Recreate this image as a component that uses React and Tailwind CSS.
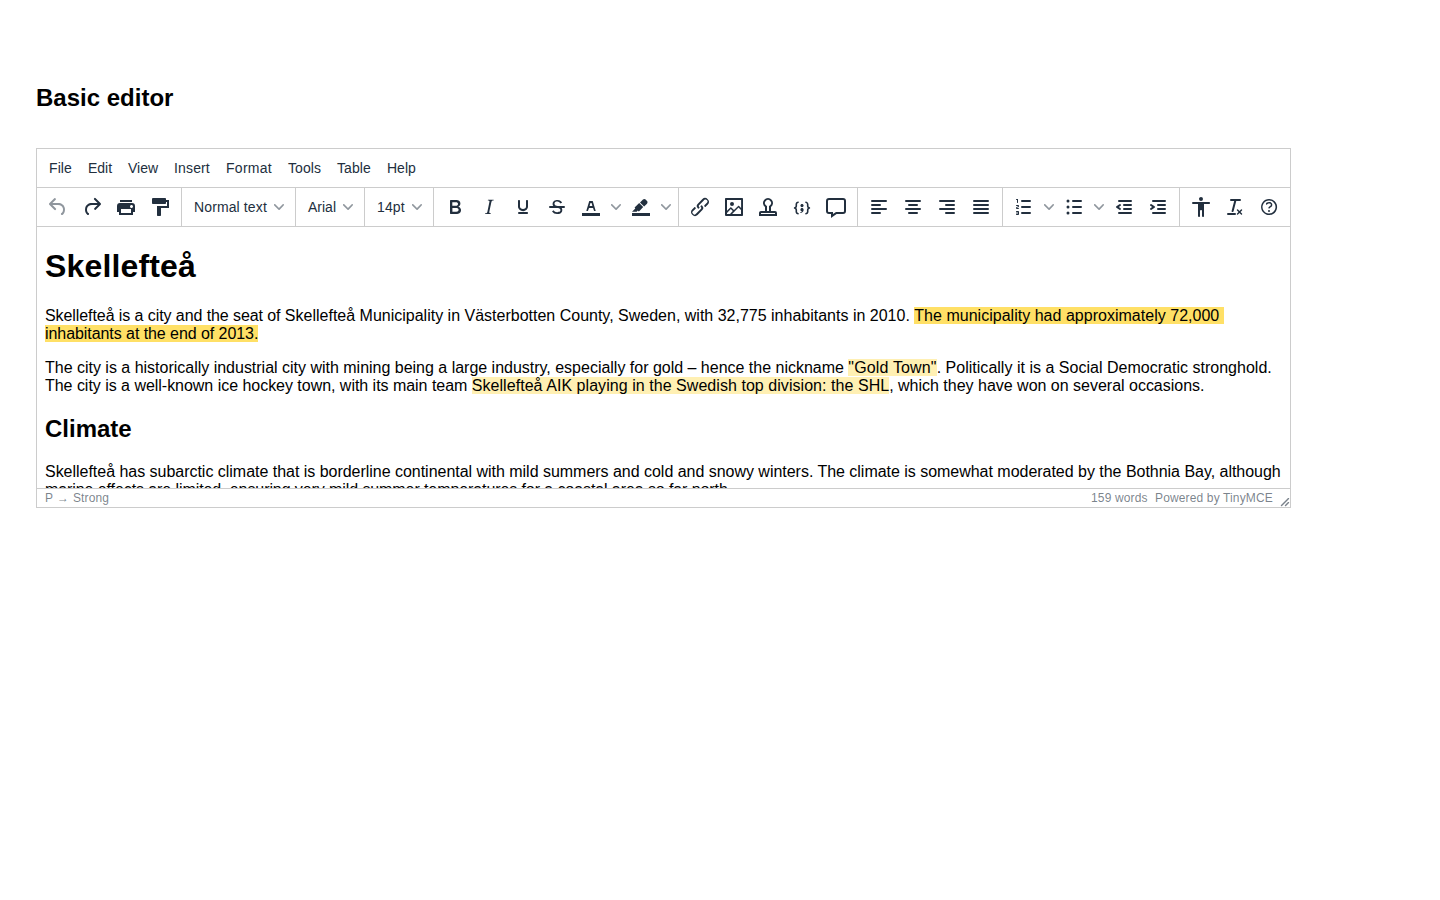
const ICONS = {
  undo: ['M6.4 8H12c3.7 0 6.2 2 6.8 5.1.6 2.7-.4 5.6-2.3 6.8a1 1 0 01-1-1.8c1.1-.6 1.8-2.7 1.4-4.6-.5-2.1-2.1-3.5-4.9-3.5H6.4l3.3 3.3a1 1 0 11-1.4 1.4l-5-5a1 1 0 010-1.4l5-5a1 1 0 011.4 1.4L6.4 8z'],
  redo: ['M17.6 10H12c-2.8 0-4.4 1.4-4.9 3.5-.4 2 .3 4 1.4 4.6a1 1 0 11-1 1.8c-2-1.2-2.9-4.1-2.3-6.8.6-3 3-5.1 6.8-5.1h5.6l-3.3-3.3a1 1 0 111.4-1.4l5 5a1 1 0 010 1.4l-5 5a1 1 0 01-1.4-1.4l3.3-3.3z'],
  print: ['M18 8H6a3 3 0 00-3 3v6h2v3h14v-3h2v-6a3 3 0 00-3-3zm-1 10H7v-4h10v4zm.5-5c-.8 0-1.5-.7-1.5-1.5s.7-1.5 1.5-1.5 1.5.7 1.5 1.5-.7 1.5-1.5 1.5zm.5-8H6v2h12V5z'],
  painter: ['M18 5V4c0-.5-.4-1-1-1H5a1 1 0 00-1 1v4c0 .6.5 1 1 1h12c.6 0 1-.4 1-1V7h1v4H9v9c0 .6.4 1 1 1h2c.6 0 1-.4 1-1v-7h8V5h-3z'],
  bold: ['M7.8 19c-.3 0-.5 0-.6-.2l-.2-.5V5.7c0-.2 0-.4.2-.5l.6-.2h5c1.5 0 2.7.3 3.5 1 .7.6 1.1 1.4 1.1 2.5a3 3 0 01-.6 1.9c-.4.6-1 1-1.6 1.2.4.1.9.3 1.3.6s.8.7 1 1.2c.4.4.5 1 .5 1.6 0 1.3-.4 2.3-1.3 3-.8.7-2.1 1-3.8 1H7.8zm5-8.3c.6 0 1.2-.1 1.6-.5.4-.3.6-.7.6-1.3 0-1.1-.8-1.7-2.3-1.7H9.3v3.5h3.4zm.5 6c.7 0 1.3-.1 1.7-.4.4-.4.6-.9.6-1.5s-.2-1-.7-1.4c-.4-.3-1-.4-2-.4H9.4v3.8h4z'],
  italic: ['M16.7 4.7l-.1.9h-.3c-.6 0-1 0-1.4.3-.3.3-.4.6-.5 1.1l-2.1 9.8v.6c0 .5.4.8 1.4.8h.2l-.2.8H8l.2-.8h.2c1.1 0 1.8-.5 2-1.5l2-9.8.1-.5c0-.6-.4-.8-1.4-.8h-.3l.2-.9h5.8z'],
  underline: ['M16 5c.6 0 1 .4 1 1v5.5a4 4 0 01-.4 1.8l-1 1.4a5.3 5.3 0 01-5.5 1 5 5 0 01-1.6-1c-.5-.4-.8-.9-1.1-1.4a4 4 0 01-.4-1.8V6c0-.6.4-1 1-1s1 .4 1 1v5.5c0 .3 0 .6.2 1l.6.7a3.3 3.3 0 002.2.8 3.4 3.4 0 002.2-.8c.3-.2.4-.5.6-.8l.2-.9V6c0-.6.4-1 1-1zM8 17h8c.6 0 1 .4 1 1s-.4 1-1 1H8a1 1 0 010-2z'],
  strike: ['M15.6 8.5c-.5-.7-1-1.1-1.3-1.3-.6-.4-1.3-.6-2-.6-2.7 0-2.8 1.7-2.8 2.1 0 1.6 1.8 2 3.2 2.3 4.4.9 4.6 2.8 4.6 3.9 0 1.4-.7 4.1-5 4.1A6.2 6.2 0 017 16.4l1.5-1.1c.4.6 1.6 2 3.7 2 1.6 0 2.5-.4 3-1.2.4-.8.3-2-.8-2.6-.7-.4-1.6-.7-2.9-1-1-.2-3.9-.8-3.9-3.6C7.6 6 10.3 5 12.4 5c2.9 0 4.2 1.6 4.7 2.4l-1.5 1.1z', 'M5 11h14a1 1 0 010 2H5a1 1 0 010-2z'],
  color: ['M3 18h18v3H3z', 'M8.7 16h-.8a.5.5 0 01-.5-.6l2.7-9c.1-.3.3-.4.5-.4h2.8c.2 0 .4.1.5.4l2.7 9a.5.5 0 01-.5.6h-.8a.5.5 0 01-.4-.4l-.7-2.2c0-.3-.3-.4-.5-.4h-3.4c-.2 0-.4.1-.5.4l-.7 2.2c0 .3-.2.4-.4.4zm2.6-7.6l-.6 2a.5.5 0 00.5.6h1.6a.5.5 0 00.5-.6l-.6-2c0-.3-.3-.4-.5-.4h-.4c-.2 0-.4.1-.5.4z'],
  highlight: ['M3 18h18v3H3z', 'M7.7 16.7H3l3.3-3.3-.7-.8L10.2 8l4 4.1-4 4.2c-.2.2-.6.2-.8 0l-.6-.7-1.1 1.1zm5-7.5L11 7.4l3-2.9a2 2 0 012.6 0L18 6c.7.7.7 2 0 2.7l-2.9 2.9-1.8-1.8-.5-.6'],
  link: ['M6.2 12.3a1 1 0 011.4 1.4l-2.1 2a2 2 0 102.7 2.8l4.8-4.8a1 1 0 000-1.4 1 1 0 111.4-1.3 2.9 2.9 0 010 4L9.6 20a3.9 3.9 0 01-5.5-5.5l2-2zm11.6-.6a1 1 0 01-1.4-1.4l2-2a2 2 0 10-2.6-2.8L11 10.3a1 1 0 000 1.4A1 1 0 119.6 13a2.9 2.9 0 010-4L14.4 4a3.9 3.9 0 015.5 5.5l-2 2z'],
  image: ['M5 15.7l3.3-3.2c.3-.3.7-.3 1 0L12 15l4.1-4c.3-.4.8-.4 1 0l2 1.9V5H5v10.7zM5 18V19h3l2.8-2.9-2-2L5 17.9zm14-3l-2.5-2.4-6.4 6.5H19v-4zM4 3h16c.6 0 1 .4 1 1v16c0 .6-.4 1-1 1H4a1 1 0 01-1-1V4c0-.6.4-1 1-1zm6 8a2 2 0 100-4 2 2 0 000 4z'],
  stamp: ['M19 19v-1H5v1h14zM9 16v-4a5 5 0 116 0v4h4a2 2 0 012 2v3H3v-3c0-1.1.9-2 2-2h4zm4 0v-5l.8-.6a3 3 0 10-3.6 0l.8.6v5h2z'],
  code: ['M7.1 11a2.8 2.8 0 01-.8 2 2.8 2.8 0 01.8 2v1.700c0 .3.1.6.4.8.2.3.5.4.8.4.3 0 .4.2.4.4v.8c0 .2-.1.4-.4.4-.7 0-1.400-.3-2-.8-.5-.6-.8-1.300-.8-2V15c0-.3-.1-.6-.4-.8-.2-.3-.5-.4-.8-.4a.4.4 0 01-.4-.4v-.8c0-.2.2-.4.4-.4.3 0 .6-.1.8-.4.3-.2.4-.5.4-.8V9.300c0-.7.3-1.400.8-2 .6-.5 1.300-.8 2-.8.3 0 .4.2.4.4v.8c0 .2-.1.4-.4.4-.3 0-.6.1-.8.4-.3.2-.4.5-.4.8V11zm9.800 0V9.300c0-.3-.1-.6-.4-.8-.2-.3-.5-.4-.8-.4a.4.4 0 01-.4-.4V7c0-.2.1-.4.4-.4.7 0 1.400.3 2 .8.5.6.8 1.300.8 2V11c0 .3.1.6.4.8.2.3.5.4.8.4.2 0 .4.2.4.4v.8c0 .2-.2.4-.4.4-.3 0-.6.1-.8.4-.3.2-.4.5-.4.8v1.700c0 .7-.3 1.400-.8 2-.6.5-1.300.8-2 .8a.4.4 0 01-.4-.4v-.8c0-.2.1-.4.4-.4.3 0 .6-.1.8-.4.3-.2.4-.5.4-.8V15a2.800 2.800 0 01.8-2 2.800 2.800 0 01-.8-2zm-3.300-.4c0 .4-.1.8-.5 1.100-.3.3-.7.5-1.100.5-.4 0-.8-.2-1.100-.5-.4-.3-.5-.7-.5-1.100 0-.5.1-.9.5-1.200.3-.3.7-.4 1.100-.4.4 0 .8.1 1.100.4.4.3.5.7.5 1.200zM12 13c.4 0 .8.1 1.100.5.4.3.5.7.5 1.100 0 1-.1 1.600-.5 2a3 3 0 01-1.100 1c-.4.3-.8.4-1.100.4a.5.5 0 01-.5-.5V17a3 3 0 001-.2l.6-.6c-.6 0-1-.2-1.300-.5-.2-.3-.3-.7-.3-1 0-.5.1-1 .5-1.200.3-.4.7-.5 1.100-.5z'],
  comment: ['M9 19l3-2h7c.6 0 1-.4 1-1V6c0-.6-.4-1-1-1H5a1 1 0 00-1 1v10c0 .6.4 1 1 1h4v2zm-2 4v-4H5a3 3 0 01-3-3V6a3 3 0 013-3h14a3 3 0 013 3v10a3 3 0 01-3 3h-6.400L7 23z'],
  left: ['M5 5h14a1 1 0 010 2H5a1 1 0 110-2zm0 4h8a1 1 0 010 2H5a1 1 0 110-2zm0 8h8a1 1 0 010 2H5a1 1 0 010-2zm0-4h14a1 1 0 010 2H5a1 1 0 010-2z'],
  center: ['M5 5h14a1 1 0 010 2H5a1 1 0 110-2zm3 4h8a1 1 0 010 2H8a1 1 0 110-2zm0 8h8a1 1 0 010 2H8a1 1 0 010-2zm-3-4h14a1 1 0 010 2H5a1 1 0 010-2z'],
  right: ['M5 5h14a1 1 0 010 2H5a1 1 0 110-2zm6 4h8a1 1 0 010 2h-8a1 1 0 010-2zm0 8h8a1 1 0 010 2h-8a1 1 0 010-2zm-6-4h14a1 1 0 010 2H5a1 1 0 010-2z'],
  justify: ['M5 5h14a1 1 0 010 2H5a1 1 0 110-2zm0 4h14a1 1 0 010 2H5a1 1 0 110-2zm0 4h14a1 1 0 010 2H5a1 1 0 010-2zm0 4h14a1 1 0 010 2H5a1 1 0 010-2z'],
  ordered: ['M10 17h8a1 1 0 010 2h-8a1 1 0 010-2zm0-6h8a1 1 0 010 2h-8a1 1 0 010-2zm0-6h8a1 1 0 010 2h-8a1 1 0 110-2zM6 4v3.500c0 .3-.2.5-.5.5a.5.5 0 01-.5-.5V5h-.5a.5.5 0 010-1H6zm-1 8.800l.2.2h1.300c.3 0 .5.2.5.5s-.2.5-.5.5H4.900a1 1 0 01-.9-1V13c0-.4.3-.8.6-1l1.200-.4.2-.3a.2.2 0 00-.2-.2H4.500a.5.5 0 01-.5-.5c0-.3.2-.5.5-.5h1.600c.5 0 .9.4.9 1v.1c0 .4-.3.8-.6 1l-1.200.4-.2.3zM7 17v2c0 .6-.4 1-1 1H4.500a.5.5 0 010-1h1.200c.2 0 .3-.1.3-.3 0-.2-.1-.3-.3-.3H4.400a.4.4 0 110-.8h1.300c.2 0 .3-.1.3-.3 0-.2-.1-.3-.3-.3H4.500a.5.5 0 110-1H6c.6 0 1 .4 1 1z'],
  bullets: ['M11 5h8a1 1 0 010 2h-8a1 1 0 010-2zm0 6h8a1 1 0 010 2h-8a1 1 0 010-2zm0 6h8a1 1 0 010 2h-8a1 1 0 010-2zM4.500 6a1.500 1.500 0 103 0 1.500 1.500 0 10-3 0zm0 6a1.500 1.500 0 103 0 1.500 1.500 0 10-3 0zm0 6a1.500 1.500 0 103 0 1.500 1.500 0 10-3 0z'],
  outdent: ['M7 5h12a1 1 0 010 2H7a1 1 0 110-2zm5 4h7a1 1 0 010 2h-7a1 1 0 010-2zm0 4h7a1 1 0 010 2h-7a1 1 0 010-2zm-5 4h12a1 1 0 010 2H7a1 1 0 010-2zm1.600-3.800a1 1 0 01-1.200 1.600l-3-2a1 1 0 010-1.600l3-2a1 1 0 011.200 1.600L6.800 12l1.800 1.200z'],
  indent: ['M7 5h12a1 1 0 010 2H7a1 1 0 110-2zm5 4h7a1 1 0 010 2h-7a1 1 0 010-2zm0 4h7a1 1 0 010 2h-7a1 1 0 010-2zm-5 4h12a1 1 0 010 2H7a1 1 0 010-2zm-2.600-3.800L6.200 12l-1.800-1.200a1 1 0 011.200-1.600l3 2a1 1 0 010 1.600l-3 2a1 1 0 11-1.200-1.600z'],
  a11y: ['M12 2a2 2 0 012 2 2 2 0 01-2 2 2 2 0 01-2-2c0-1.100.9-2 2-2zm8 7h-5v12c0 .6-.4 1-1 1a1 1 0 01-1-1v-5c0-.6-.4-1-1-1a1 1 0 00-1 1v5c0 .6-.4 1-1 1a1 1 0 01-1-1V9H4a1 1 0 110-2h16c.6 0 1 .4 1 1s-.4 1-1 1z'],
  clear: ['M13.200 6a1 1 0 010 .2l-2.600 10a1 1 0 01-1 .8h-.2a.8.8 0 01-.8-1l2.600-10H8a1 1 0 110-2h9a1 1 0 010 2h-3.800zM5 18h7a1 1 0 010 2H5a1 1 0 010-2zm13 1.500L16.500 18 15 19.500a.7.7 0 01-1-1l1.500-1.500-1.500-1.500a.7.7 0 011-1l1.500 1.500 1.500-1.500a.7.7 0 011 1L17.500 17l1.500 1.500a.7.7 0 01-1 1z'],
  help: ['M12 5.500a6.500 6.500 0 00-6 9 6.300 6.300 0 001.400 2l1 1a6.300 6.300 0 003.600 1 6.500 6.500 0 006-9 6.300 6.300 0 00-1.400-2l-1-1a6.300 6.300 0 00-3.600-1zM12 4a7.800 7.800 0 015.700 2.300A8 8 0 1112 4z', 'M9.600 9.700a.7.7 0 01-.7-.8c0-1.100 1.500-1.800 3.200-1.800 1.800 0 3.200.8 3.200 2.400 0 1.400-.4 2.100-1.500 2.800-.2.1-.3.1-.3.2a2 2 0 00-.8.8.8.8 0 01-1.400-.6c.3-.7.8-1 1.300-1.500l.4-.2c.7-.4.8-.6.8-1.500 0-.5-.6-.9-1.700-.9-.5 0-1 .1-1.400.3-.2 0-.3.1-.3.2v-.2c0 .4-.4.8-.8.8z', 'M11 16a1 1 0 102 0 1 1 0 10-2 0z'],
};

function Icon({ name }) {
  return (
    <svg width="24" height="24" viewBox="0 0 24 24" fill="currentColor" fillRule="evenodd">
      {ICONS[name].map((d) => <path key={d} d={d} />)}
    </svg>
  );
}

function Chevron() {
  return (
    <span className="flex w-4 shrink-0 items-center justify-center text-[#222f3e]/50">
      <svg width="10" height="10" viewBox="0 0 10 10" fill="currentColor">
        <path d="M8.7 2.2c.3-.3.8-.3 1 0 .4.4.4.9 0 1.2L5.7 7.8c-.3.3-.9.3-1.2 0L.2 3.4a.8.8 0 010-1.2c.3-.3.8-.3 1.1 0L5 6l3.7-3.8z" />
      </svg>
    </span>
  );
}

function Tool({ name, split, disabled }) {
  return (
    <button aria-label={name} className={split ? 'flex h-[34px] w-[50px] items-center' : 'flex h-[34px] w-[34px] items-center'}>
      <span className={disabled ? 'flex w-[34px] justify-center opacity-50' : 'flex w-[34px] justify-center'}>
        <Icon name={name} />
      </span>
      {split && <Chevron />}
    </button>
  );
}

function Select({ label, className }) {
  return (
    <button className="flex h-[34px] items-center pr-1 pl-2">
      <span className={`mr-1 text-left text-sm whitespace-nowrap ${className}`}>{label}</span>
      <Chevron />
    </button>
  );
}

function Group({ children, last }) {
  return (
    <div className={last ? 'flex shrink-0 items-center px-1' : 'flex shrink-0 items-center border-r border-[#cccccc] px-1'}>
      {children}
    </div>
  );
}

const MENUS = [
  ['File', 'w-[23px] tracking-[0.1px]'],
  ['Edit', 'w-[24px]'],
  ['View', 'w-[30px]'],
  ['Insert', 'w-[36px] tracking-[0.15px]'],
  ['Format', 'w-[46px] tracking-[0.28px]'],
  ['Tools', 'w-[33px] tracking-[0.1px]'],
  ['Table', 'w-[34px] tracking-[0.1px]'],
  ['Help', 'w-[29px]'],
];

export default function App() {
  return (
    <main className="min-h-screen bg-white px-9 pt-[84px] font-['Liberation_Sans',Arial,sans-serif] text-black">
      <h2 className="text-2xl leading-[27px] font-bold">Basic editor</h2>
      <div className="mt-[37px] flex h-[360px] w-[1255px] flex-col border border-[#cccccc] text-[#222f3e]">
        <nav className="flex h-[39px] shrink-0 items-center gap-4 border-b border-[#cccccc] px-3 text-sm">
          {MENUS.map(([label, className]) => <button key={label} className={`text-left whitespace-nowrap ${className}`}>{label}</button>)}
        </nav>
        <div className="flex h-[39px] shrink-0 border-b border-[#cccccc]">
          <Group><Tool name="undo" disabled /><Tool name="redo" /><Tool name="print" /><Tool name="painter" /></Group>
          <Group><Select label="Normal text" className="w-[73px] tracking-[0.12px]" /></Group>
          <Group><Select label="Arial" className="w-[28px]" /></Group>
          <Group><Select label="14pt" className="w-[28px] tracking-[0.15px]" /></Group>
          <Group><Tool name="bold" /><Tool name="italic" /><Tool name="underline" /><Tool name="strike" /><Tool name="color" split /><Tool name="highlight" split /></Group>
          <Group><Tool name="link" /><Tool name="image" /><Tool name="stamp" /><Tool name="code" /><Tool name="comment" /></Group>
          <Group><Tool name="left" /><Tool name="center" /><Tool name="right" /><Tool name="justify" /></Group>
          <Group><Tool name="ordered" split /><Tool name="bullets" split /><Tool name="outdent" /><Tool name="indent" /></Group>
          <Group last><Tool name="a11y" /><Tool name="clear" /><Tool name="help" /></Group>
        </div>
        <article className="min-h-0 flex-1 overflow-hidden px-2 text-base leading-[18px] whitespace-nowrap text-black">
          <h1 className="mt-[21px] text-[32px] leading-[37px] font-bold tracking-[0.15px]">Skellefteå</h1>
          <p className="mt-[22px]">
            <span className="tracking-[-0.08px]">Skellefteå is a city and the seat of </span>
            Skellefteå Municipality in Västerbotten County, Sweden, with 32,775 inhabitants in 2010.{' '}
            <span className="bg-[#ffe066] tracking-[0.02px]">The municipality had approximately 72,000&nbsp;</span>
            <br />
            <span className="bg-[#ffe066] tracking-[-0.065px]">inhabitants at the end of 2013.</span>
          </p>
          <p className="mt-4">
            <span className="tracking-[-0.01px]">The city is a historically industrial city with mining being a large industry, especially for gold – hence the nickname </span>
            <span className="bg-[#fff0b3] tracking-[0.15px]">"Gold Town"</span>
            <span className="tracking-[0.015px]">. Politically it is a Social Democratic stronghold.</span>
            <br />
            <span className="tracking-[-0.03px]">The city is a well-known ice hockey town, with its main team </span>
            <span className="bg-[#fff0b3] tracking-[0.05px]">Skellefteå AIK playing in the Swedish top division: the SHL</span>
            <span className="tracking-[-0.01px]">, which they have won on several occasions.</span>
          </p>
          <h2 className="mt-5 text-2xl leading-[27px] font-bold">Climate</h2>
          <p className="mt-[21px] tracking-[-0.025px]">
            Skellefteå has subarctic climate that is borderline continental with mild summers and cold and snowy winters. The climate is somewhat moderated by the Bothnia Bay, although
            <br />
            <span className="tracking-[-0.09px]">marine effects are limited, ensuring very mild summer temperatures for a coastal area so far north.</span>
          </p>
        </article>
        <footer className="flex h-[19px] shrink-0 items-center border-t border-[#cccccc] pl-2 text-xs leading-[18px] text-[#222f3e]/60">
          <span className="flex gap-1"><span>P</span><span>→</span><span className="tracking-[0.1px]">Strong</span></span>
          <span className="ml-auto w-[57px] tracking-[0.15px] whitespace-nowrap">159 words</span>
          <span className="ml-[7px] w-[118px] tracking-[0.14px] whitespace-nowrap">Powered by TinyMCE</span>
          <svg className="ml-[7px] self-end" width="10" height="10" viewBox="0 0 10 10" fill="currentColor">
            <path d="M8.1 1.1A.5.5 0 119 2l-7 7A.5.5 0 111 8l7-7zM8.1 5.1A.5.5 0 119 6l-3 3A.5.5 0 115 8l3-3z" />
          </svg>
        </footer>
      </div>
    </main>
  );
}
